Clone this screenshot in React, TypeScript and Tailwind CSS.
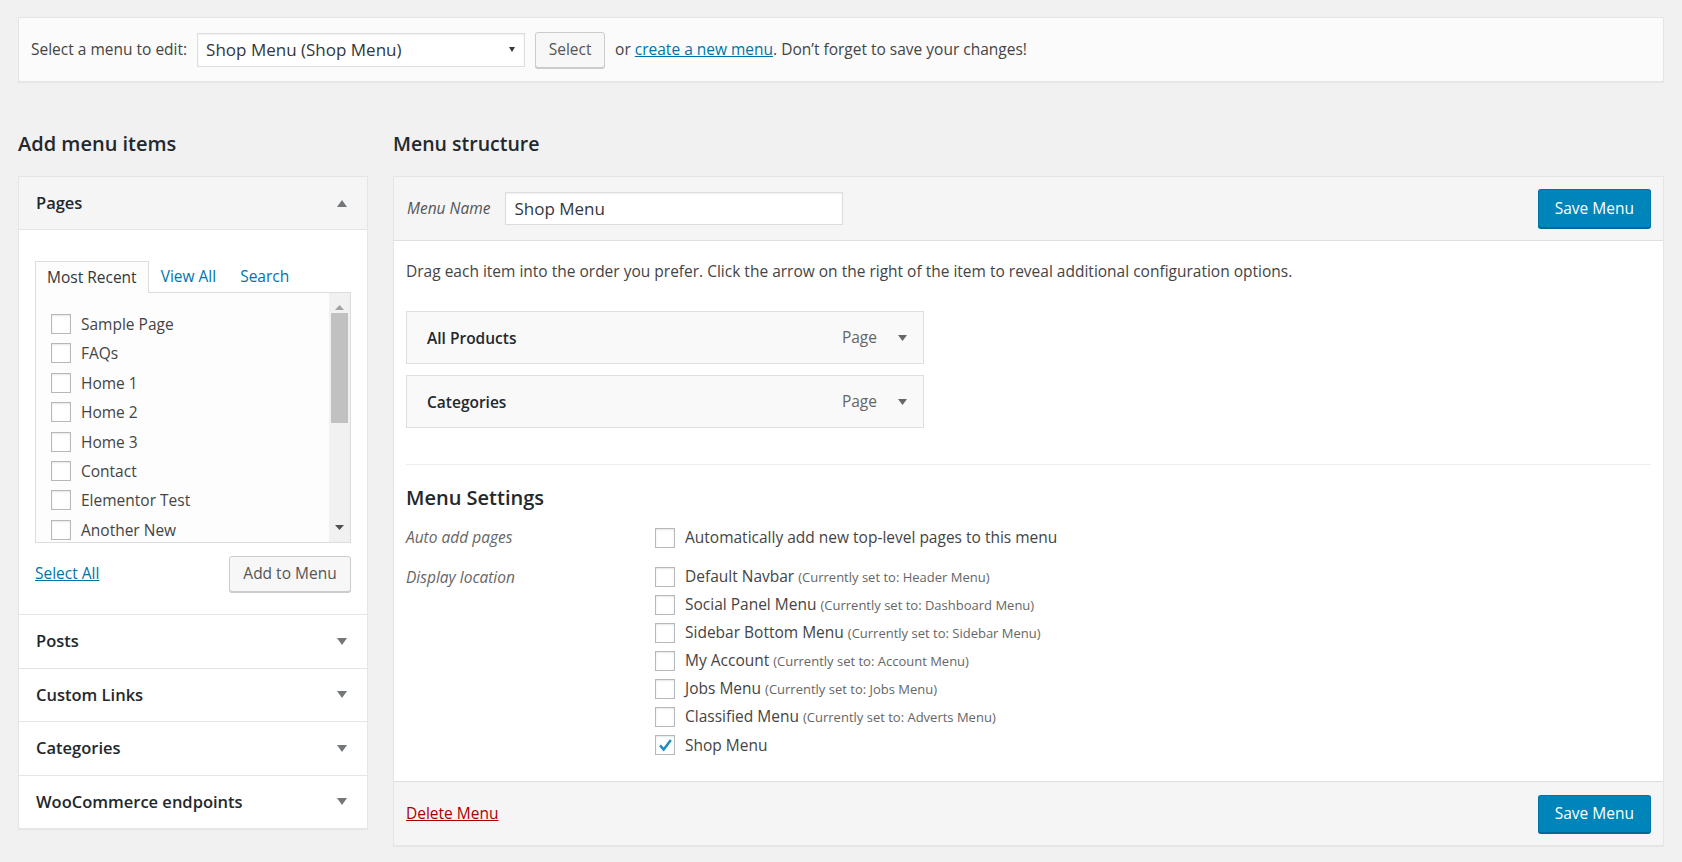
import React from "react";

const PAGES = ["Sample Page", "FAQs", "Home 1", "Home 2", "Home 3", "Contact", "Elementor Test", "Another New"];

const SECTIONS = ["Posts", "Custom Links", "Categories", "WooCommerce endpoints"];

const MENU_ITEMS = ["All Products", "Categories"];

const LOCATIONS = [
    { name: "Default Navbar", current: "Header Menu" },
    { name: "Social Panel Menu", current: "Dashboard Menu" },
    { name: "Sidebar Bottom Menu", current: "Sidebar Menu" },
    { name: "My Account", current: "Account Menu" },
    { name: "Jobs Menu", current: "Jobs Menu" },
    { name: "Classified Menu", current: "Adverts Menu" },
    { name: "Shop Menu", current: "", checked: true },
];

const Triangle = ({ up = false, color = "#72777c", w = 10, h = 7 }: { up?: boolean; color?: string; w?: number; h?: number }) => (
    <svg width={w} height={h} viewBox={`0 0 ${w} ${h}`} className="shrink-0">
        {up ? (
            <path d={`M0 ${h} L${w / 2} 0 L${w} ${h} Z`} fill={color} />
        ) : (
            <path d={`M0 0 L${w / 2} ${h} L${w} 0 Z`} fill={color} />
        )}
    </svg>
);

const Checkbox = ({ checked = false }: { checked?: boolean }) => (
    <span className="inline-flex h-5 w-5 shrink-0 items-center justify-center border border-[#b4b9be] bg-white shadow-[inset_0_1px_2px_rgba(0,0,0,0.1)]">
        {checked && (
            <svg width="18" height="18" viewBox="0 0 20 20">
                <path d="M4.5 10.5 L8.5 15 L16.5 4.5" stroke="#1e8cbe" strokeWidth="2.8" fill="none" />
            </svg>
        )}
    </span>
);

const SaveButton = ({ h }: { h: string }) => (
    <button className={`${h} rounded-[3px] border border-[#0073aa] border-b-[#006799] bg-[#0085ba] px-[16px] text-[15.5px] leading-none text-white shadow-[0_1px_0_#006799]`}>
        Save Menu
    </button>
);

const PagesBox = () => (
    <div className="px-4 pb-[22px] pt-[31px]">
        <div className="flex items-end text-[15.5px] leading-[21px]">
            <div className="relative z-10 -mb-px border border-b-0 border-[#dddddd] bg-[#fdfdfd] px-[11px] pb-[5px] pt-[5px] text-[#32373c]">
                Most Recent
            </div>
            <span className="px-3 pb-[5px] text-[#0073aa]">View All</span>
            <span className="px-3 pb-[5px] text-[#0073aa]">Search</span>
        </div>
        <div className="flex h-[251px] border border-[#dddddd] bg-[#fdfdfd]">
            <div className="flex-1 overflow-hidden pl-[15px] pt-[21px]">
                {PAGES.map((p) => (
                    <div key={p} className="flex h-[29.4px] items-start gap-[10px] text-[15.5px] leading-[20px] text-[#444]">
                        <Checkbox />
                        <span>{p}</span>
                    </div>
                ))}
            </div>
            <div className="flex w-[21px] flex-col items-center bg-[#f1f1f1]">
                <div className="flex h-[20px] items-end pb-[3px]">
                    <Triangle up color="#a3a3a3" w={9} h={5} />
                </div>
                <div className="h-[110px] w-[17px] bg-[#c1c1c1]" />
                <div className="flex-1" />
                <div className="flex h-[22px] items-start pt-[5px]">
                    <Triangle color="#505050" w={9} h={5} />
                </div>
            </div>
        </div>
        <div className="mt-[13px] flex items-center justify-between">
            <span className="text-[15.5px] text-[#0073aa] underline">Select All</span>
            <button className="h-[36px] w-[122px] rounded-[3px] border border-[#cccccc] bg-[#f7f7f7] text-[15.5px] text-[#555] shadow-[0_1px_0_#cccccc]">
                Add to Menu
            </button>
        </div>
    </div>
);

export default function App() {
    return (
        <div className="min-h-[862px] bg-[#f1f1f1] px-[18px] pt-[17px] font-['Open_Sans',sans-serif] text-[#444]">
            {/* menu picker */}
            <div className="flex h-[65px] items-center border border-[#e5e5e5] bg-[#fbfbfb] px-3 text-[15.5px] shadow-[0_1px_1px_rgba(0,0,0,0.04)]">
                <span>Select a menu to edit:</span>
                <div className="ml-[10px] flex h-[34px] w-[328px] items-center justify-between border border-[#dddddd] bg-white pl-2 pr-[9px] text-[17px] text-[#32373c] shadow-[inset_0_1px_2px_rgba(0,0,0,0.07)]">
                    <span>Shop Menu (Shop Menu)</span>
                    <Triangle color="#32373c" w={6} h={5} />
                </div>
                <button className="ml-[10px] h-[36px] w-[70px] rounded-[3px] border border-[#cccccc] bg-[#f7f7f7] text-[15.5px] text-[#555] shadow-[0_1px_0_#cccccc]">
                    Select
                </button>
                <span className="ml-[10px]">
                    or <span className="text-[#0073aa] underline">create a new menu</span>. Don’t forget to save your changes!
                </span>
            </div>

            <div className="mt-[49px] flex gap-[25px]">
                {/* left column */}
                <div className="w-[350px] shrink-0">
                    <h2 className="mb-[19px] text-[20px] font-semibold leading-[26px] text-[#23282d]">Add menu items</h2>
                    <div className="border border-[#e5e5e5] bg-white shadow-[0_1px_1px_rgba(0,0,0,0.04)]">
                        <div className="flex h-[53px] items-center justify-between border-b border-[#e5e5e5] bg-[#f5f5f5] pl-[17px] pr-[20px]">
                            <span className="text-[16.5px] font-semibold leading-[22px] text-[#23282d]">Pages</span>
                            <Triangle up />
                        </div>
                        <PagesBox />
                        {SECTIONS.map((s) => (
                            <div key={s} className="flex h-[53.5px] items-center justify-between border-t border-[#e5e5e5] pl-[17px] pr-[20px]">
                                <span className="text-[16.5px] font-semibold leading-[22px] text-[#23282d]">{s}</span>
                                <Triangle />
                            </div>
                        ))}
                    </div>
                </div>

                {/* right column */}
                <div className="flex-1">
                    <h2 className="mb-[19px] text-[19.5px] font-semibold leading-[26px] text-[#23282d]">Menu structure</h2>
                    <div className="border border-[#e5e5e5] bg-white shadow-[0_1px_1px_rgba(0,0,0,0.04)]">
                        <div className="flex h-[64px] items-center justify-between border-b border-[#dfdfdf] bg-[#f5f5f5] pl-[13px] pr-3">
                            <div className="flex items-center gap-[15px]">
                                <span className="text-[15.5px] italic text-[#555]">Menu Name</span>
                                <div className="flex h-[33px] w-[338px] items-center border border-[#dddddd] bg-white px-2 text-[17px] text-[#32373c] shadow-[inset_0_1px_2px_rgba(0,0,0,0.07)]">
                                    Shop Menu
                                </div>
                            </div>
                            <SaveButton h="h-[39px]" />
                        </div>

                        <div className="px-3 pb-[26px] pt-[20px]">
                            <p className="text-[15.5px] leading-[21px] text-[#444]">
                                Drag each item into the order you prefer. Click the arrow on the right of the item to reveal additional configuration options.
                            </p>
                            <div className="mt-[29px] flex flex-col gap-[11px]">
                                {MENU_ITEMS.map((m) => (
                                    <div key={m} className="flex h-[53px] w-[518px] items-center justify-between border border-[#dfdfdf] bg-[#f9f9f9] pl-[20px] pr-[16px]">
                                        <span className="pt-[3px] text-[15.5px] font-semibold text-[#23282d]">{m}</span>
                                        <div className="flex items-center gap-[21px]">
                                            <span className="text-[15.5px] text-[#666]">Page</span>
                                            <Triangle color="#666" w={9} h={6} />
                                        </div>
                                    </div>
                                ))}
                            </div>

                            <div className="mt-[36px] border-t border-[#eeeeee] pt-[20px]">
                                <h3 className="text-[20px] font-semibold leading-[26px] text-[#23282d]">Menu Settings</h3>
                                <div className="mt-[16px] flex items-center text-[15.5px] leading-[21px]">
                                    <span className="w-[249px] italic text-[#666]">Auto add pages</span>
                                    <div className="flex items-center gap-[10px]">
                                        <Checkbox />
                                        <span>Automatically add new top-level pages to this menu</span>
                                    </div>
                                </div>
                                <div className="mt-[19px] flex text-[15.5px] leading-[21px]">
                                    <span className="w-[249px] italic text-[#666]">Display location</span>
                                    <div className="flex flex-col gap-[8px]">
                                        {LOCATIONS.map((l) => (
                                            <div key={l.name} className="flex h-5 items-center gap-[10px]">
                                                <Checkbox checked={l.checked} />
                                                <span>
                                                    {l.name}
                                                    {l.current && (
                                                        <span className="ml-[4px] text-[13px] text-[#666]">(Currently set to: {l.current})</span>
                                                    )}
                                                </span>
                                            </div>
                                        ))}
                                    </div>
                                </div>
                            </div>
                        </div>

                        <div className="flex h-[64px] items-center justify-between border-t border-[#dddddd] bg-[#f5f5f5] pl-3 pr-3">
                            <span className="text-[15.5px] text-[#aa0000] underline">Delete Menu</span>
                            <SaveButton h="h-[38px]" />
                        </div>
                    </div>
                </div>
            </div>
        </div>
    );
}
